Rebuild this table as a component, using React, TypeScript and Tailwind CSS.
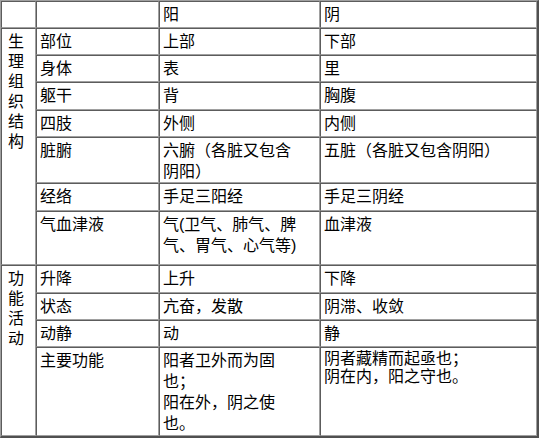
const font = "font-['Liberation_Sans','Noto_Sans_CJK_SC',sans-serif]";

const cell =
  "border border-t-[#5c5c5c] border-l-[#5c5c5c] border-r-[#a0a0a0] border-b-[#a0a0a0] align-top p-0 pt-[2px] pl-[3px]";

type Row = {
  label: string;
  yang: string[];
  yin: string[];
  h: string;
  yinLeading?: string;
};

const structureRows: Row[] = [
  { label: "部位", yang: ["上部"], yin: ["下部"], h: "h-[27px]" },
  { label: "身体", yang: ["表"], yin: ["里"], h: "h-[27px]" },
  { label: "躯干", yang: ["背"], yin: ["胸腹"], h: "h-[28px]" },
  { label: "四肢", yang: ["外侧"], yin: ["内侧"], h: "h-[27px]" },
  { label: "脏腑", yang: ["六腑（各脏又包含", "阴阳）"], yin: ["五脏（各脏又包含阴阳）"], h: "h-[46px]" },
  { label: "经络", yang: ["手足三阳经"], yin: ["手足三阴经"], h: "h-[28px]" },
  { label: "气血津液", yang: ["气(卫气、肺气、脾", "气、胃气、心气等)"], yin: ["血津液"], h: "h-[54px]" },
];

const functionRows: Row[] = [
  { label: "升降", yang: ["上升"], yin: ["下降"], h: "h-[28px]" },
  { label: "状态", yang: ["亢奋，发散"], yin: ["阴滞、收敛"], h: "h-[27px]" },
  { label: "动静", yang: ["动"], yin: ["静"], h: "h-[27px]" },
  {
    label: "主要功能",
    yang: ["阳者卫外而为固", "也；", "阳在外，阴之使", "也。"],
    yin: ["阴者藏精而起亟也；", "阴在内，阳之守也。"],
    h: "h-[89px]",
    yinLeading: "leading-[18px]",
  },
];

function Lines({ lines }: { lines: string[] }) {
  return (
    <>
      {lines.map((line, i) => (
        <div key={i} className="whitespace-nowrap">
          {line}
        </div>
      ))}
    </>
  );
}

function GroupCell({ chars, span }: { chars: string; span: number }) {
  return (
    <td rowSpan={span} className={`${cell} pl-[6px] pt-[3px] leading-[20px]`}>
      {chars.split("").map((c, i) => (
        <div key={i}>{c}</div>
      ))}
    </td>
  );
}

function BodyRow({ row, group }: { row: Row; group?: React.ReactNode }) {
  const yangLeading = row.yang.length > 1 ? "leading-[21px]" : "leading-[22px]";
  const yinLeading = row.yinLeading ?? (row.yin.length > 1 ? "leading-[21px]" : "leading-[22px]");
  return (
    <tr className={row.h}>
      {group}
      <td className={`${cell} leading-[22px]`}>{row.label}</td>
      <td className={`${cell} ${yangLeading}`}>
        <Lines lines={row.yang} />
      </td>
      <td className={`${cell} ${yinLeading}`}>
        <Lines lines={row.yin} />
      </td>
    </tr>
  );
}

export default function App() {
  return (
    <div className={`bg-white text-black text-[16px] ${font}`}>
      <table className="w-[539px] table-fixed border-separate border-spacing-0 border-t border-l border-r-2 border-b-2 border-t-[#a0a0a0] border-l-[#a0a0a0] border-r-[#505050] border-b-[#505050]">
        <colgroup>
          <col className="w-[35px]" />
          <col className="w-[123px]" />
          <col className="w-[161px]" />
          <col />
        </colgroup>
        <tbody>
          <tr className="h-[27px]">
            <td className={`${cell} leading-[22px]`}></td>
            <td className={`${cell} leading-[22px]`}></td>
            <td className={`${cell} leading-[22px]`}>阳</td>
            <td className={`${cell} leading-[22px]`}>阴</td>
          </tr>
          {structureRows.map((row, i) => (
            <BodyRow
              key={row.label}
              row={row}
              group={i === 0 ? <GroupCell chars="生理组织结构" span={structureRows.length} /> : undefined}
            />
          ))}
          {functionRows.map((row, i) => (
            <BodyRow
              key={row.label}
              row={row}
              group={i === 0 ? <GroupCell chars="功能活动" span={functionRows.length} /> : undefined}
            />
          ))}
        </tbody>
      </table>
    </div>
  );
}
